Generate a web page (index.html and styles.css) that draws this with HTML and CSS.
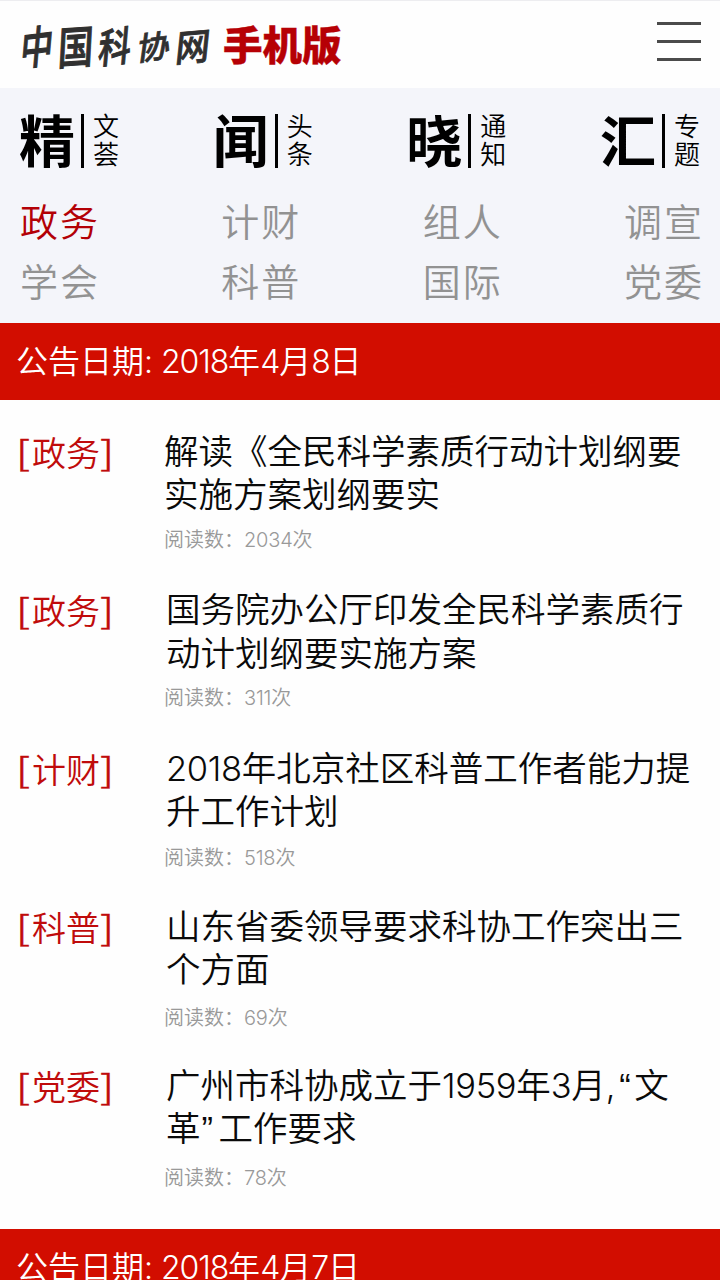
FILE: index.html
```html
<!DOCTYPE html>
<html lang="zh-CN">
<head>
<meta charset="utf-8">
<title>中国科协网 手机版</title>
<link rel="stylesheet" href="styles.css">
</head>
<body>
<div class="page">
  <header class="header">
    <div class="logo">
      <span class="brush"><i class="b1">中</i><i class="b2">国</i><i class="b3">科</i><i class="b4">协</i><i class="b5">网</i></span>
      <span class="mobile">手机版</span>
    </div>
    <div class="menu"><span></span><span></span><span></span></div>
  </header>
  <nav class="nav">
    <div class="features">
      <a class="feature"><b>精</b><span>文<br>荟</span></a>
      <a class="feature"><b>闻</b><span>头<br>条</span></a>
      <a class="feature"><b>晓</b><span>通<br>知</span></a>
      <a class="feature"><b>汇</b><span>专<br>题</span></a>
    </div>
    <div class="cats"><a class="active">政务</a><a>计财</a><a>组人</a><a>调宣</a></div>
    <div class="cats"><a>学会</a><a>科普</a><a>国际</a><a>党委</a></div>
  </nav>
  <h2 class="date">公告日期<span class="colon">:</span><span class="num">2018</span>年<span class="num">4</span>月<span class="num">8</span>日</h2>
  <main class="list">
    <article class="item first">
      <div class="tag"><span>[</span>政务<span>]</span></div>
      <div class="body"><h3>解读《全民科学素质行动计划纲要<br>实施方案划纲要实</h3><p>阅读数：<span class="num">2034</span>次</p></div>
    </article>
    <article class="item">
      <div class="tag"><span>[</span>政务<span>]</span></div>
      <div class="body"><h3>国务院办公厅印发全民科学素质行<br>动计划纲要实施方案</h3><p>阅读数：<span class="num">311</span>次</p></div>
    </article>
    <article class="item">
      <div class="tag"><span>[</span>计财<span>]</span></div>
      <div class="body"><h3><span class="num">2018</span>年北京社区科普工作者能力提<br>升工作计划</h3><p>阅读数：<span class="num">518</span>次</p></div>
    </article>
    <article class="item">
      <div class="tag"><span>[</span>科普<span>]</span></div>
      <div class="body"><h3>山东省委领导要求科协工作突出三<br>个方面</h3><p>阅读数：<span class="num">69</span>次</p></div>
    </article>
    <article class="item">
      <div class="tag"><span>[</span>党委<span>]</span></div>
      <div class="body"><h3>广州市科协成立于<span class="num">1959</span>年<span class="num">3</span>月<span class="num">,</span><span class="quote open">“</span>文<br>革<span class="quote">”</span>工作要求</h3><p>阅读数：<span class="num">78</span>次</p></div>
    </article>
  </main>
  <h2 class="date">公告日期<span class="colon">:</span><span class="num">2018</span>年<span class="num">4</span>月<span class="num">7</span>日</h2>
</div>
</body>
</html>
```
FILE: styles.css
```css
* { box-sizing: border-box; }
body { margin: 0; background: #fefefe; }
.page {
  width: 720px; height: 1280px; overflow: hidden;
  border-top: 1px solid #ededf0;
  font-family: "Noto Sans CJK SC", sans-serif;
  font-weight: 350; color: #0a0a0a;
}
.num { font-family: Inter, "Liberation Sans", sans-serif; font-weight: 350; letter-spacing: -.01em; line-height: 1; }
.quote { font-family: "Liberation Sans", sans-serif; line-height: 1; display: inline-block; width: 18px; padding-left: 1px; }
.quote.open { width: 19px; padding-left: 4px; }
.header { height: 87px; padding: 0 19px 0 20px; display: flex; justify-content: space-between; }
.logo { display: flex; align-items: center; height: 88px; }
.brush { display: flex; width: 203px; color: #303030; }
.brush i {
  width: 39px; font: 500 34px/44px "Noto Sans CJK SC", sans-serif;
  -webkit-text-stroke: .8px #303030;
}
.brush .b1 { transform: skew(-5deg, -7deg) scale(.96, 1.32); }
.brush .b2 { transform: skew(-3deg, -4deg) scale(1.04, 1.32); }
.brush .b3 { transform: skew(-5deg, -7deg) scale(.96, 1.2); }
.brush .b4 { transform: skew(-8deg, -8deg) scale(.96, .95); }
.brush .b5 { transform: skew(-6deg, -5deg) scale(1, 1.1); }
.mobile { font: 900 39.5px/44px "Noto Sans CJK SC", sans-serif; color: #b60005; -webkit-text-stroke: .4px #b60005; position: relative; top: -2px; }
.menu { width: 44px; padding-top: 21px; display: flex; flex-direction: column; gap: 15px; }
.menu span { height: 3px; background: #4b4b4b; }
.nav { height: 235px; background: #f4f5fa; padding: 26px 19px 0 19px; }
.features { display: flex; justify-content: space-between; height: 55px; }
.feature { display: flex; color: #000; }
.feature b { width: 62px; height: 54px; font-size: 56px; line-height: 48px; font-weight: 700; }
.feature span {
  height: 54px; padding: 0 0 4px 9px; border-left: 3px solid #000;
  font-size: 26px; line-height: 28.5px; font-weight: 350;
  display: flex; align-items: center; margin-right: 1px;
}
.cats { display: flex; justify-content: space-between; height: 59px; line-height: 59px; font-size: 38px; letter-spacing: 2px; color: #929292; padding-left: 1px; margin-right: -3px; }
.features + .cats { margin-top: 21px; height: 60px; }
.cats .active { color: #b30006; }
.date { margin: 0; height: 77px; padding-left: 16px; background: #d20d00; color: #fff; font-size: 32px; line-height: 73px; font-weight: 350; white-space: nowrap; }
.date .num { letter-spacing: -.035em; }
.colon { font-family: Inter, sans-serif; display: inline-block; width: 17px; line-height: 1; }
.list { height: 829px; padding-top: 28px; }
.item { display: flex; height: 158.4px; padding-left: 18px; }
.tag { width: 148px; font-size: 34px; line-height: 48px; color: #c00b0b; white-space: nowrap; }
.tag span { display: inline-block; width: 12px; line-height: 1; transform: scaleX(1.25); transform-origin: left; -webkit-text-stroke: .3px #c00b0b; }
.tag span:first-child { margin-left: -2px; width: 16px; }
.first .tag { width: 146px; }
.body { white-space: nowrap; }
h3 { margin: 0; font-size: 34.5px; line-height: 43.3px; font-weight: 350; }
.body p { margin: 10.5px 0 0 -2px; font-size: 20px; line-height: 28px; color: #999; }
.first .body p { margin-left: 0; }
.item:nth-child(3) .body p { margin-top: 12px; }
.item:nth-child(4) .body p { margin-top: 13.3px; }
.item:nth-child(5) .body p { margin-top: 14.6px; }
```
